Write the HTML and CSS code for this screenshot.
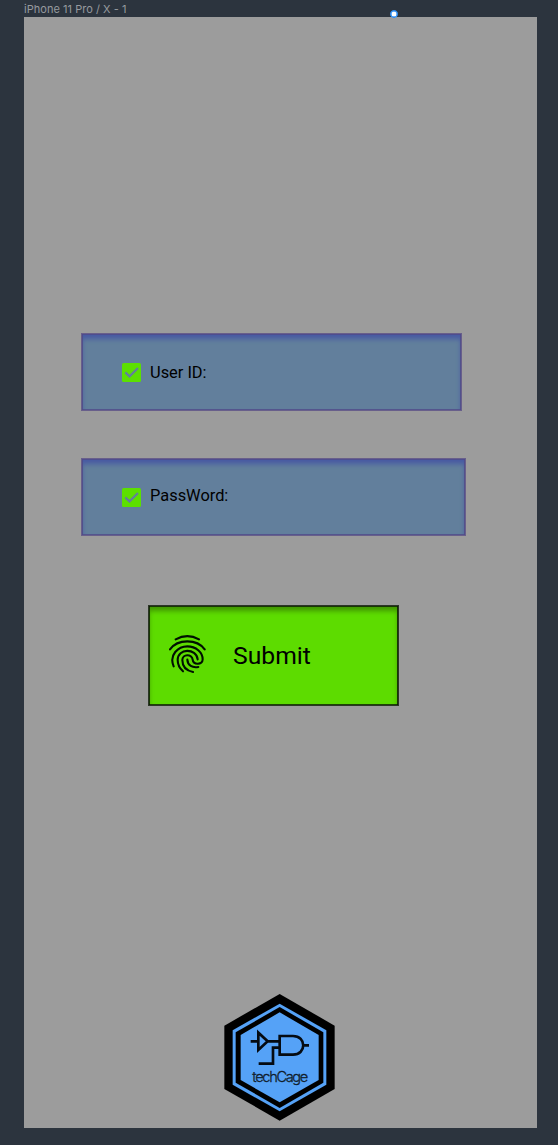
FILE: index.html
```
<!DOCTYPE html>
<html lang="en">
<head>
<meta charset="utf-8">
<title>iPhone 11 Pro / X - 1</title>
<link rel="stylesheet" href="styles.css">
</head>
<body>
<header class="artboard-title">iPhone 11 Pro / X - 1</header>
<span class="handle"></span>
<main class="artboard">
  <div class="field field-user">
    <svg class="check" viewBox="0 0 19 19"><rect width="19" height="19" rx="1.5"/><path d="M3.3 9.4 7.5 13.4 16 5"/></svg>
    <span class="label">User ID:</span>
  </div>
  <div class="field field-password">
    <svg class="check" viewBox="0 0 19 19"><rect width="19" height="19" rx="1.5"/><path d="M3.3 9.4 7.5 13.4 16 5"/></svg>
    <span class="label">PassWord:</span>
  </div>
  <div class="submit">
    <svg class="fingerprint" viewBox="21 18 114 120">
      <path d="M41 34Q76 15 111 34"/>
      <path d="M24 64C47 32 105 32 128 64"/>
      <path d="M35 115C20 80 49 55 76 55C102 55 122 73 122 94C122 111 94 112 92 95C90 77 61 77 61 96C61 116 74 128 93 132"/>
      <path d="M63 130C53 121 47 109 47 96C47 60 103 60 107 94"/>
      <path d="M76 95C77 113 91 120 109 117"/>
    </svg>
    <span class="submit-text">Submit</span>
  </div>
  <svg class="logo" viewBox="27 24 336 384">
    <path d="M194 27 359 122V312L194 407 28 312V122Z"/>
    <path class="blue" d="M194 56 334 136V299L194 379 53 299V136Z"/>
    <path d="M194 66 325 142V293L194 369 62 293V142Z"/>
    <path class="blue" d="M194 82 311 150V285L194 352 77 285V150Z"/>
    <path class="wire" d="M107 169H130M130 143V195L158 169ZM158 169H194M131 236H174V188H194M194 153H234C275 153 275 209 234 209H194ZM265 181H282"/>
    <text x="112" y="290" textLength="168">techCage</text>
  </svg>
</main>
</body>
</html>
```
FILE: styles.css
```
body {
  margin: 0;
  height: 1145px;
  overflow: hidden;
  background: #2c343e;
  font-family: Roboto, sans-serif;
  color: #000;
}

.artboard-title {
  height: 17px;
  padding-left: 24px;
  font: 11px/18px Inter, sans-serif;
  letter-spacing: 0.03px;
  color: #969a9f;
}

.handle {
  position: absolute;
  left: 390px;
  top: 10px;
  box-sizing: border-box;
  width: 8px;
  height: 8px;
  border: 1px solid #1683f5;
  border-radius: 50%;
  background: #fff;
  box-shadow: inset 0 0 0 0.5px #1683f5;
}

.artboard {
  box-sizing: border-box;
  display: flex;
  flex-direction: column;
  align-items: flex-start;
  width: 513px;
  height: 1111px;
  margin-left: 24px;
  padding-top: 316px;
  background: #9c9c9c;
}

.field {
  box-sizing: border-box;
  display: flex;
  align-items: center;
  gap: 9px;
  height: 78px;
  margin-left: 57px;
  padding-left: 40px;
  border: 1px solid #685f8b;
  background: #627f9c;
  box-shadow: inset 0 0 0 0.8px #514a88, inset 0 5px 5px #485aa3, inset 0 0 2px #5870a0;
}

.field-user {
  width: 381px;
}

.field-password {
  width: 385px;
  margin-top: 47px;
}

.check {
  width: 19px;
  height: 19px;
}

.check rect {
  fill: #5ce000;
}

.check path {
  fill: none;
  stroke: #627f9c;
  stroke-width: 2.2;
}

.label {
  font-size: 16.4px;
  line-height: 20px;
  padding-top: 1px;
}

.field-password .label {
  padding: 0 0 2px;
}

.submit {
  box-sizing: border-box;
  display: flex;
  align-items: center;
  width: 251px;
  height: 101px;
  margin: 69px 0 0 124px;
  padding-left: 20px;
  border: 1px solid #2b3526;
  background: #5ddc00;
  box-shadow: inset 0 0 0 0.8px #0b1604, inset 0 5px 5px #409600, inset 0 0 2px #4fb800;
}

.fingerprint {
  width: 38px;
  height: 40px;
  margin-top: -3px;
  fill: none;
  stroke: #001000;
  stroke-width: 6.3;
  stroke-linecap: round;
}

.submit-text {
  margin-left: 26px;
  padding-top: 1px;
  font-size: 24.7px;
  line-height: 30px;
}

.logo {
  width: 112px;
  height: 128px;
  margin: 287px 0 0 200px;
}

.logo .blue {
  fill: #55a2f7;
}

.logo .wire {
  fill: none;
  stroke: #050b12;
  stroke-width: 8;
}

.logo text {
  font: 300 44px Inter, sans-serif;
  fill: #101d2c;
  stroke: #101d2c;
  stroke-width: 0.8;
}
```
